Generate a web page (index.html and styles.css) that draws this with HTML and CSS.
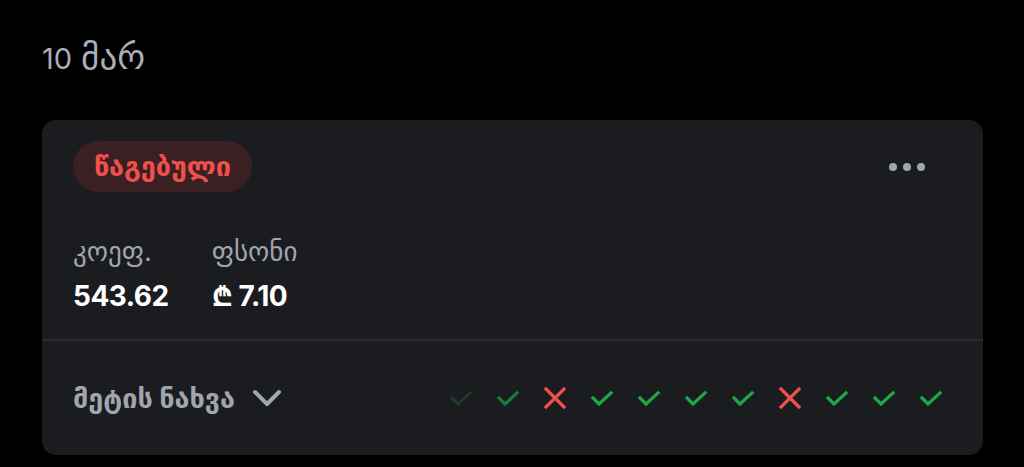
FILE: index.html
```html
<!DOCTYPE html>
<html lang="ka">
<head>
    <meta charset="UTF-8">
    <meta name="viewport" content="width=device-width, initial-scale=1.0">
    <title>ბილეთი</title>
    <link rel="stylesheet" href="styles.css">
</head>
<body>
    <div class="page">
        <div class="date">10 <span class="ka">მარ</span></div>

        <div class="card">
            <div class="card-top">
                <div class="head">
                    <span class="badge">წაგებული</span>
                    <span class="dots"><i></i><i></i><i></i></span>
                </div>
                <div class="stats">
                    <div class="stat">
                        <div class="label">კოეფ.</div>
                        <div class="value">543.62</div>
                    </div>
                    <div class="stat">
                        <div class="label">ფსონი</div>
                        <div class="value">₾ 7.10</div>
                    </div>
                </div>
            </div>

            <div class="card-bottom">
                <div class="more">
                    მეტის ნახვა
                    <svg width="30" height="20" viewBox="0 0 30 20"><path d="M3 4 L15 16 L27 4" fill="none" stroke="#a0a5ae" stroke-width="4" stroke-linecap="round" stroke-linejoin="round"/></svg>
                </div>
                <div class="results">
                    <svg class="ok faded" viewBox="0 0 24 24"><path d="M3 12 L9 18 L21 7"/></svg>
                    <svg class="ok dim" viewBox="0 0 24 24"><path d="M3 12 L9 18 L21 7"/></svg>
                    <svg class="bad" viewBox="0 0 24 24"><path d="M3 3 L21 21 M21 3 L3 21"/></svg>
                    <svg class="ok" viewBox="0 0 24 24"><path d="M3 12 L9 18 L21 7"/></svg>
                    <svg class="ok" viewBox="0 0 24 24"><path d="M3 12 L9 18 L21 7"/></svg>
                    <svg class="ok" viewBox="0 0 24 24"><path d="M3 12 L9 18 L21 7"/></svg>
                    <svg class="ok" viewBox="0 0 24 24"><path d="M3 12 L9 18 L21 7"/></svg>
                    <svg class="bad" viewBox="0 0 24 24"><path d="M3 3 L21 21 M21 3 L3 21"/></svg>
                    <svg class="ok" viewBox="0 0 24 24"><path d="M3 12 L9 18 L21 7"/></svg>
                    <svg class="ok" viewBox="0 0 24 24"><path d="M3 12 L9 18 L21 7"/></svg>
                    <svg class="ok" viewBox="0 0 24 24"><path d="M3 12 L9 18 L21 7"/></svg>
                </div>
            </div>
        </div>
    </div>
</body>
</html>
```

FILE: styles.css
```css
body {
    margin: 0;
    background: #000;
    font-family: Inter, "DejaVu Sans", sans-serif;
    color: #fff;
}
.page {
    padding: 38px 41px 0 42px;
}
.date {
    height: 36px;
    display: flex;
    align-items: baseline;
    gap: 9px;
    font-size: 29px;
    color: #a9aeb7;
    line-height: 36px;
}
.date .ka {
    font-size: 35px;
}
.card {
    margin-top: 46px;
    background: #1b1c20;
    border-radius: 14px;
}
.card-top {
    padding: 21px 31px 25px 31px;
    border-bottom: 2px solid #2b2c31;
}
.head {
    display: flex;
    justify-content: space-between;
    align-items: center;
}
.badge {
    background: #3a1f23;
    color: #f0504a;
    font-weight: bold;
    font-size: 27px;
    height: 51px;
    line-height: 51px;
    padding: 0 21px;
    border-radius: 26px;
}
.dots {
    display: flex;
    gap: 6px;
    margin-right: 27px;
}
.dots i {
    width: 8px;
    height: 8px;
    border-radius: 50%;
    background: #a0a5ae;
}
.stats {
    display: flex;
    gap: 43px;
    margin-top: 45px;
}
.label {
    font-size: 27px;
    color: #a0a5ae;
    line-height: 30px;
}
.value {
    font-size: 28px;
    font-weight: bold;
    line-height: 36px;
    margin-top: 11px;
    letter-spacing: -0.5px;
}
.card-bottom {
    display: flex;
    justify-content: space-between;
    align-items: center;
    height: 114px;
    padding: 0 40px 0 31px;
}
.more {
    display: flex;
    align-items: center;
    gap: 17px;
    font-size: 27px;
    font-weight: bold;
    color: #a0a5ae;
}
.results {
    display: flex;
    gap: 23px;
}
.results svg {
    width: 24px;
    height: 24px;
    fill: none;
    stroke-width: 3.2;
    stroke-linecap: square;
}
.ok {
    stroke: #1fa84a;
}
.ok.dim {
    stroke: #1b7a3a;
}
.ok.faded {
    stroke: #1c3a26;
}
.bad {
    stroke: #f0504a;
}
```
